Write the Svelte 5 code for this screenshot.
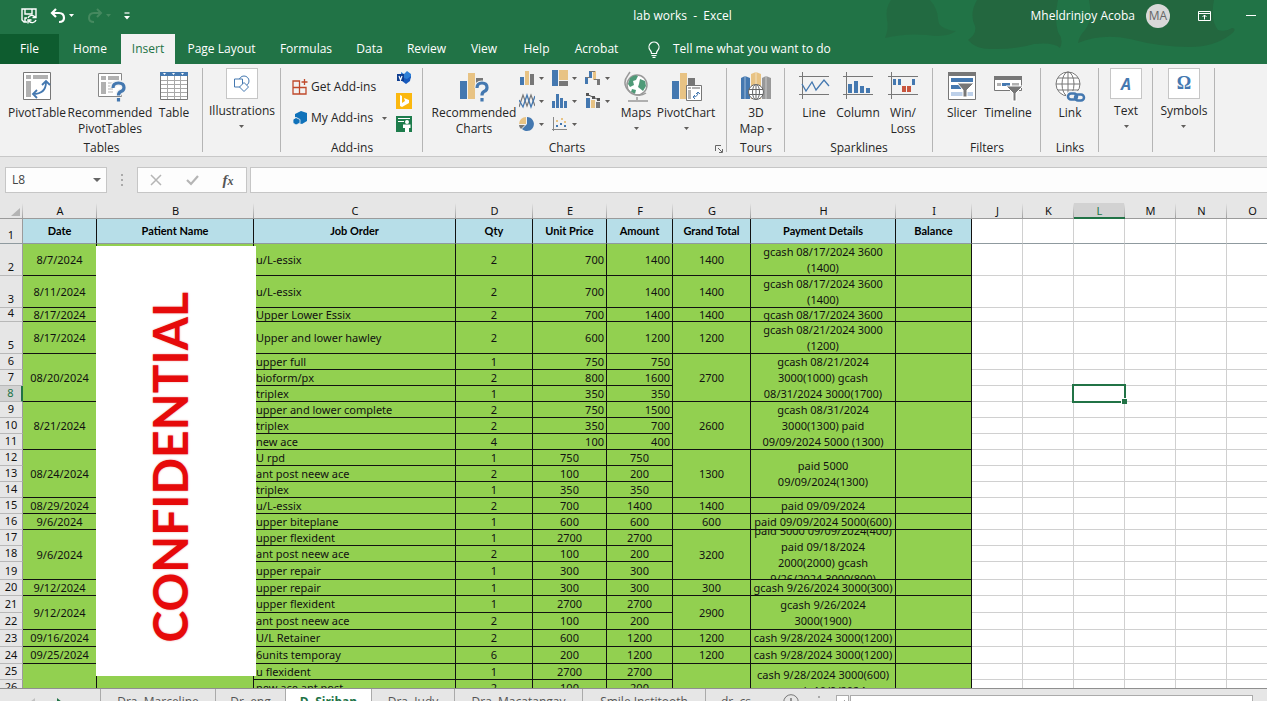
<script>
	const tabs = ['File', 'Home', 'Insert', 'Page Layout', 'Formulas', 'Data', 'Review', 'View', 'Help', 'Acrobat'];
	let activeTab = $state('Insert');

	const cols = [
		['A', 74], ['B', 157], ['C', 202], ['D', 77], ['E', 74], ['F', 66], ['G', 78], ['H', 145], ['I', 76],
		['J', 51], ['K', 51], ['L', 51], ['M', 51], ['N', 51], ['O', 51]
	];
	const blanks = cols.slice(9).map((c) => c[0]);
	const titles = ['Date', 'Patient Name', 'Job Order', 'Qty', 'Unit Price', 'Amount', 'Grand Total', 'Payment Details', 'Balance'];

	// span is how many rows the date, name, total, payment and balance cells cover
	const rows = [
		{ h: 32, span: 1, date: '8/7/2024', job: 'u/L-essix', qty: 2, price: 700, amount: 1400, total: 1400, pay: 'gcash 08/17/2024 3600\n(1400)' },
		{ h: 32, span: 1, date: '8/11/2024', job: 'u/L-essix', qty: 2, price: 700, amount: 1400, total: 1400, pay: 'gcash 08/17/2024 3600\n(1400)' },
		{ h: 14, span: 1, date: '8/17/2024', job: 'Upper Lower Essix', qty: 2, price: 700, amount: 1400, total: 1400, pay: 'gcash 08/17/2024 3600' },
		{ h: 32, span: 1, date: '8/17/2024', job: 'Upper and lower hawley', qty: 2, price: 600, amount: 1200, total: 1200, pay: 'gcash 08/21/2024 3000\n(1200)' },
		{ h: 16, span: 3, date: '08/20/2024', job: 'upper full', qty: 1, price: 750, amount: 750, total: 2700, pay: 'gcash 08/21/2024\n3000(1000) gcash\n08/31/2024 3000(1700)' },
		{ h: 16, job: 'bioform/px', qty: 2, price: 800, amount: 1600 },
		{ h: 16, job: 'triplex', qty: 1, price: 350, amount: 350 },
		{ h: 16, span: 3, date: '8/21/2024', job: 'upper and lower complete', qty: 2, price: 750, amount: 1500, total: 2600, pay: 'gcash 08/31/2024\n3000(1300) paid\n09/09/2024 5000 (1300)' },
		{ h: 16, job: 'triplex', qty: 2, price: 350, amount: 700 },
		{ h: 16, job: 'new ace', qty: 4, price: 100, amount: 400 },
		{ h: 16, span: 3, date: '08/24/2024', job: 'U rpd', qty: 1, price: 750, amount: 750, total: 1300, pay: 'paid 5000\n09/09/2024(1300)' },
		{ h: 16, job: 'ant post neew ace', qty: 2, price: 100, amount: 200 },
		{ h: 16, job: 'triplex', qty: 1, price: 350, amount: 350 },
		{ h: 16, span: 1, date: '08/29/2024', job: 'u/L-essix', qty: 2, price: 700, amount: 1400, total: 1400, pay: 'paid 09/09/2024' },
		{ h: 16, span: 1, date: '9/6/2024', job: 'upper biteplane', qty: 1, price: 600, amount: 600, total: 600, pay: 'paid 09/09/2024 5000(600)' },
		{ h: 16, span: 3, date: '9/6/2024', job: 'upper flexident', qty: 1, price: 2700, amount: 2700, total: 3200, pay: 'paid 5000 09/09/2024(400)\npaid 09/18/2024\n2000(2000) gcash\n9/26/2024 3000(800)' },
		{ h: 16, job: 'ant post neew ace', qty: 2, price: 100, amount: 200 },
		{ h: 18, job: 'upper repair', qty: 1, price: 300, amount: 300 },
		{ h: 16, span: 1, date: '9/12/2024', job: 'upper repair', qty: 1, price: 300, amount: 300, total: 300, pay: 'gcash 9/26/2024 3000(300)' },
		{ h: 17, span: 2, date: '9/12/2024', job: 'upper flexident', qty: 1, price: 2700, amount: 2700, total: 2900, pay: 'gcash 9/26/2024\n3000(1900)' },
		{ h: 17, job: 'ant post neew ace', qty: 2, price: 100, amount: 200 },
		{ h: 17, span: 1, date: '09/16/2024', job: 'U/L Retainer', qty: 2, price: 600, amount: 1200, total: 1200, pay: 'cash 9/28/2024 3000(1200)' },
		{ h: 17, span: 1, date: '09/25/2024', job: '6units temporay', qty: 6, price: 200, amount: 1200, total: 1200, pay: 'cash 9/28/2024 3000(1200)' },
		{ h: 16, span: 3, date: '', job: 'u flexident', qty: 1, price: 2700, amount: 2700, total: '', pay: 'cash 9/28/2024 3000(600)\ngcash 10/9/2024' },
		{ h: 16, job: 'new ace ant post', qty: 2, price: 100, amount: 200 },
		{ h: 7, job: '', qty: '', price: '', amount: '' }
	];

	function spanHeight(i) {
		return rows.slice(i, i + rows[i].span).reduce((sum, r) => sum + r.h, 0) - 1;
	}

	const sheets = ['Dra. Marceline', 'Dr. eng', 'D. Siriban', 'Dra. Judy', 'Dra. Macatangay', 'Smile Institooth', 'dr. cs'];
	let activeSheet = $state('D. Siriban');
	let formula = $state('');
	let cellName = $state('L8');
</script>

{#snippet caret()}
	<svg class="caret" width="5" height="3" viewBox="0 0 5 3"><path d="M0 0h5L2.5 3z" fill="#605e5c" /></svg>
{/snippet}

{#snippet bars()}
	<path d="M2 11h7v18H2z" fill="#4478b0" /><path d="M10 3h7v26h-7z" fill="#e8c384" />
{/snippet}

<div class="app">
	<header>
		<svg class="clouds" width="400" height="64" viewBox="0 0 400 64" fill="#23673f">
			<path d="M24 0q-6 8-4 20 2 8-2 18 20-5 42-3 20 3 29-4-18-2-18-12 0-10-8-19z" opacity=".7" />
			<path d="M110 0q-8 14-2 26 2 8-7 14 8 10 26 9 24 0 40-5 20-2 26 4 4-8-2-16-4-14 0-32z" />
			<path d="M222 0q4 20-4 30-6 6-7 13 24-10 52-4 30 8 60 8 24 0 40-12 8-6 2-7-6 4-14 2-8-10-4-30z" />
		</svg>
		<div class="titlebar">
			<div class="quick">
				<button aria-label="Save">
					<svg width="16" height="16" viewBox="0 0 16 16" fill="none" stroke="#fff" stroke-width="1.4">
						<path d="M6 14H3L1 12V1h14v5M4 1v5h7V1M4 14v-4h2" /><path d="M7 10a4 4 0 0 1 7-1M15 6v3.500h-3.500M15 12a4 4 0 0 1-7 1M7 15.500V12h3.500" />
					</svg>
				</button>
				<button aria-label="Undo">
					<svg width="24" height="16" viewBox="0 0 24 16" fill="none"><path d="M6 1L2 5l4 4M2 5h7q5 0 5 5 0 4-5 4" stroke="#fff" stroke-width="2.200" /><path d="M19 6h5l-2.500 3z" fill="#fff" /></svg>
				</button>
				<button aria-label="Redo">
					<svg width="24" height="16" viewBox="0 0 24 16" fill="none"><path d="M10 1l4 4-4 4M14 5H7q-5 0-5 5 0 4 5 4" stroke="#45895f" stroke-width="2" /><path d="M19 6h5l-2.500 3z" fill="#45895f" /></svg>
				</button>
				<button aria-label="Customize">
					<svg width="6" height="8" viewBox="0 0 6 8"><path d="M.5 1h5" stroke="#fff" stroke-width="1.200" /><path d="M0 4h6L3 7.500z" fill="#fff" /></svg>
				</button>
			</div>
			<div class="doc">lab works&nbsp; -&nbsp; Excel</div>
			<div class="account">
				<span>Mheldrinjoy Acoba</span>
				<span class="avatar">MA</span>
				<button class="display" aria-label="Ribbon display options">
					<svg width="13" height="10" viewBox="0 0 13 10" fill="none" stroke="#fff"><path d="M.5.5h12v9H.5zM.5 2.500h12M6.500 8.500V4M4.500 6l2-2 2 2" /></svg>
				</button>
				<button aria-label="Minimize"><svg width="10" height="2" viewBox="0 0 10 2"><path d="M0 .5h10" stroke="#fff" /></svg></button>
			</div>
		</div>
		<nav>
			{#each tabs as tab}
				<button class="tab" class:file={tab === 'File'} class:active={tab === activeTab} onclick={() => (activeTab = tab)}>{tab}</button>
			{/each}
			<button class="tell">
				<svg width="12" height="17" viewBox="0 0 12 17" fill="none" stroke="#fff" stroke-width="1.200"><path d="M3.500 12.500q0-2-1.500-3.500a5 5 0 1 1 8 0q-1.500 1.500-1.500 3.500zM3.500 14.500h5M4.500 16.400h3" /></svg>
				Tell me what you want to do
			</button>
		</nav>
	</header>

	<div class="ribbon">
		<section>
			<div class="body tables">
				<button>
					<svg width="32" height="32" viewBox="0 0 32 32">
						<path d="M2.500 2.500h27v27h-27z" fill="#fff" stroke="#777" /><path d="M5 5h5v4H5zM12 5h15v4H12zM5 11h5v16H5z" fill="#b1b1b1" />
						<path d="M12 24q13 0 13-12M16 20l-4 4 4 4M21 15l4-4 4 4" fill="none" stroke="#4478b0" stroke-width="1.800" />
					</svg>PivotTable
				</button>
				<button>
					<svg width="32" height="32" viewBox="0 0 32 32">
						<path d="M4.500 3.500h23v23h-23z" fill="#fff" stroke="#888" /><path d="M7 6h5v4H7zM14 6h11v4H14zM7 12h5v12H7z" fill="#b1b1b1" /><path d="M14 13h5M14 16h5M14 19h5M14 22h5" stroke="#b1b1b1" />
						<path d="M19 18q0-5 5.500-5t5.500 4.500q0 3-3 4-2.500 1-2.500 4M24.500 28v4" fill="none" stroke="#f2f2f2" stroke-width="6" /><path d="M19 18q0-5 5.500-5t5.500 4.500q0 3-3 4-2.500 1-2.500 4M24.500 28v3.500" fill="none" stroke="#4478b0" stroke-width="3.200" />
					</svg>Recommended<br />PivotTables
				</button>
				<button>
					<svg width="32" height="32" viewBox="0 0 32 32">
						<path d="M2.500 2.500h27v27h-27z" fill="#fff" stroke="#777" /><path d="M9.500 6v23M16.500 6v23M22.500 6v23M3 10.500h26M3 14.500h26M3 18.500h26M3 22.500h26M3 26.500h26" stroke="#a8a8a8" />
						<path d="M2 2h28v4H2z" fill="#4478b0" /><path d="M5 3h3L6.500 5zM14 3h3l-1.500 2zM23 3h3l-1.500 2z" fill="#fff" />
					</svg>Table
				</button>
			</div>
			<h2>Tables</h2>
		</section>
		<section>
			<div class="body framed">
				<button>
					<span class="frame"><svg width="18" height="18" viewBox="0 0 18 18" fill="#fff" stroke="#4478b0"><circle cx="11" cy="6" r="5" /><path d="M1.500 4h8v8h-8z" /><path d="M11 7.500l4.500 4.500-4.500 4.500L6.500 12z" /></svg></span>
					Illustrations{@render caret()}
				</button>
			</div>
		</section>
		<section>
			<div class="body addins">
				<div class="stores">
					<button>
						<svg width="16" height="16" viewBox="0 0 16 16" fill="none" stroke="#c0492b" stroke-width="1.300"><path d="M1 2h6.500v6.500H1zM1 8.500h6.500V15H1zM7.500 8.500H14V15H7.500zM12.500 0v6M9.500 3h6" /></svg>
						Get Add-ins
					</button>
					<button>
						<svg width="16" height="16" viewBox="0 0 16 16" fill="#1072ba"><path d="M9 1l6 2v8l-5 3-3-1q1-5-4-6V4z" /><path d="M4 7.500l4 2V13l-4 2-3-2V9.500z" stroke="#f2f2f2" stroke-width=".8" /></svg>
						My Add-ins <span class="far">{@render caret()}</span>
					</button>
				</div>
				<div class="minis">
					<button aria-label="Visio Data Visualizer"><svg width="16" height="16" viewBox="0 0 16 16"><path d="M5 2l3 2 3-3 4 3v4l-4 2-6-4z" fill="#2f7fd6" /><path d="M6 7l5 2 4-3-1 5-4 3-4-3z" fill="#185abd" /><path d="M1 4h7v7H1z" fill="#103f91" /><path d="M3 6l1.500 4L6 6" fill="none" stroke="#fff" stroke-width="1.200" /></svg></button>
					<button aria-label="Bing Maps"><svg width="16" height="16" viewBox="0 0 16 16"><path d="M0 0h16v16H0z" fill="#fbb80f" /><path d="M4 2l2 1v7l3-2-1-3 5 2v3l-7 4-2-1z" fill="#fff" /></svg></button>
					<button aria-label="People Graph"><svg width="16" height="16" viewBox="0 0 16 16"><path d="M0 0h16v16H0z" fill="#1e7c4c" /><path d="M2 2.500h12M2 5.500h6" stroke="#fff" /><circle cx="11" cy="6" r="2" fill="#fff" /><path d="M7 8.500h7.500V12H13v4H9v-4H7z" fill="#fff" /></svg></button>
				</div>
			</div>
			<h2>Add-ins</h2>
		</section>
		<section class="charts">
			<div class="body">
				<button>
					<svg width="32" height="32" viewBox="0 0 32 32">
						{@render bars()}<path d="M18 8h7v6h-7z" fill="#777" />
						<path d="M19 18q0-5 5-5t5 4.500q0 3-3 4-2 1-2 4M24 28v3.500" fill="none" stroke="#f2f2f2" stroke-width="5" /><path d="M19 18q0-5 5-5t5 4.500q0 3-3 4-2 1-2 4M24 28v3.500" fill="none" stroke="#4478b0" stroke-width="3.200" />
					</svg>Recommended<br />Charts
				</button>
				<div class="gallery">
					<button aria-label="Column chart"><svg width="16" height="16" viewBox="0 0 16 16"><path d="M1 7h4v8H1z" fill="#4478b0" /><path d="M6 1h4v14H6z" fill="#e8c384" /><path d="M11 4h4v11h-4z" fill="#777" /></svg>{@render caret()}</button>
					<button aria-label="Hierarchy chart"><svg width="16" height="16" viewBox="0 0 16 16"><path d="M0 0h6v16H0z" fill="#4478b0" /><path d="M7 0h9v10H7z" fill="#e8c384" /><path d="M7 11h9v5H7z" fill="#777" /></svg>{@render caret()}</button>
					<button aria-label="Waterfall chart"><svg width="16" height="16" viewBox="0 0 16 16"><path d="M0 7h3v7H0zM4 1h3v7H4z" fill="#4478b0" /><path d="M8 1h3v9H8z" fill="#e8c384" /><path d="M12 9h3v6h-3z" fill="#777" /><path d="M1 7.500h4M5 1.500h5M9 9.500h5" fill="none" stroke="#777" /></svg>{@render caret()}</button>
					<button aria-label="Line chart"><svg width="16" height="16" viewBox="0 0 16 16" fill="none"><path d="M0 14L4 2l4 11 4-11 4 11" stroke="#777" stroke-width="1.200" /><path d="M0 7l4 7 4-12 4 12 4-11" stroke="#4478b0" stroke-width="1.300" /></svg>{@render caret()}</button>
					<button aria-label="Statistic chart"><svg width="16" height="16" viewBox="0 0 16 16" fill="#4478b0"><path d="M0 8h3v7H0zM4 1h3v14H4zM8 5h3v10H8zM12 8h3v7h-3z" /></svg>{@render caret()}</button>
					<button aria-label="Combo chart"><svg width="16" height="16" viewBox="0 0 16 16"><path d="M1 5h4v10H1z" fill="#4478b0" /><path d="M6 7h4v8H6z" fill="#e8c384" /><path d="M11 9h4v6h-4z" fill="#777" /><path d="M2 1.500L8 4l6 3" fill="none" stroke="#555" /><path d="M1 0h3v3H1zM7 3h3v3H7zM12 5h3v3h-3z" fill="#555" /></svg>{@render caret()}</button>
					<button aria-label="Pie chart"><svg width="16" height="16" viewBox="0 0 16 16"><path d="M7 1v7H0a7 7 0 0 1 7-7" fill="#e8c384" /><path d="M8 1a7 7 0 1 1-5 12l5-5z" fill="#4478b0" /><path d="M0 9h6l-4 4q-2-2-2-4" fill="#777" /></svg>{@render caret()}</button>
					<button aria-label="Scatter chart"><svg width="16" height="16" viewBox="0 0 16 16"><path d="M1.500 1v14M0 13.500h15" fill="none" stroke="#888" /><path d="M4 9h2v2H4zM8 7h2v2H8zM12 9h2v2h-2z" fill="#4478b0" /><path d="M4 4h2v2H4zM9 2h2v2H9zM12 5h2v2h-2z" fill="#e8c384" /></svg>{@render caret()}</button>
				</div>
				<button>
					<svg width="32" height="32" viewBox="0 0 32 32" fill="none"><circle cx="17" cy="15" r="10" fill="#fff" stroke="#999" stroke-width="1.500" /><path d="M10 8q5-4 8-2l-2 4-3 1 1 4-4 2-2-3zM20 9l5 2 1 5-3 5-5-4 1-3zM12 19l4 1-1 4-4-2z" fill="#4f9a78" /><path d="M10 2L8 5q-7 9 2 17 9 6 16 1M17 27v3M8 31h20" stroke="#999" stroke-width="1.500" /></svg>Maps{@render caret()}
				</button>
				<button>
					<svg width="32" height="32" viewBox="0 0 32 32">{@render bars()}<path d="M18 8h7v8h-7z" fill="#777" /><path d="M16.500 15.500h15v15h-15z" fill="#fff" stroke="#777" /><path d="M18 17h3v2h-3zM22 17h8v2h-8zM18 20h3v9h-3z" fill="#b1b1b1" /><path d="M23 27q5 0 5-5M25 25l-2 2 2 2M26 24l2-2 2 2" fill="none" stroke="#4478b0" /></svg>PivotChart{@render caret()}
				</button>
			</div>
			<h2>Charts</h2>
			<button class="launcher" aria-label="Chart options"><svg width="8" height="8" viewBox="0 0 8 8" fill="none" stroke="#666"><path d="M.5 6V.5H6M3 3l4 4M7.500 4v3.500H4" /></svg></button>
		</section>
		<section>
			<div class="body centered">
				<button>
					<svg width="32" height="32" viewBox="0 0 32 32"><path d="M1 8l4-2 5 2v21H1z" fill="#4478b0" /><path d="M11 4l5-2 5 2v25H11z" fill="#e8c384" /><path d="M22 8l4-2 5 2v21h-9z" fill="#999" /><path d="M5 6v23M16 2v27M26 6v23" stroke="#fff" opacity=".5" /><g fill="#fff" stroke="#666"><circle cx="16" cy="22" r="7.500" /><ellipse cx="16" cy="22" rx="3.500" ry="7.500" /><path d="M9 19.500h14M9 24.500h14M16 15v14" /></g></svg>3D<br /><span>Map {@render caret()}</span>
				</button>
			</div>
			<h2>Tours</h2>
		</section>
		<section>
			<div class="body sparklines">
				<button><svg width="32" height="32" viewBox="0 0 32 32" fill="none"><path d="M1 6.500h30M1 24.500h30M4.500 2v27" stroke="#777" /><path d="M4 14l4 7 6-9 4 8 8-10 5 6" stroke="#4478b0" stroke-width="1.300" /></svg>Line</button>
				<button><svg width="32" height="32" viewBox="0 0 32 32"><path d="M1 6.500h30M1 24.500h30M4.500 2v27" stroke="#777" /><path d="M6 14h4v9H6zM12 11h4v12h-4zM18 16h4v7h-4zM24 18h4v5h-4z" fill="#4478b0" /></svg>Column</button>
				<button><svg width="32" height="32" viewBox="0 0 32 32"><path d="M1 6.500h30M1 24.500h30M4.500 2v27" stroke="#777" /><path d="M6 9h3v6H6zM11 9h3v6h-3zM25 9h3v6h-3z" fill="#4478b0" /><path d="M15 16h4v6h-4zM20 16h4v6h-4z" fill="#c8553d" /></svg>Win/<br />Loss</button>
			</div>
			<h2>Sparklines</h2>
		</section>
		<section>
			<div class="body filters">
				<button><svg width="32" height="32" viewBox="0 0 32 32"><path d="M2.500 3.500h27v26h-27z" fill="#fff" stroke="#777" /><path d="M2 2h28v4H2z" fill="#777" /><path d="M5 8h22v4H5zM5 15h10v4H5z" fill="#4478b0" /><path d="M5 22h22v4H5z" fill="#bdd0e9" /><path d="M11 13h17l-7 7v7h-4v-7z" fill="#777" stroke="#fff" /></svg>Slicer</button>
				<button><svg width="32" height="32" viewBox="0 0 32 32"><path d="M2.500 6.500h27v14h-27z" fill="#fff" stroke="#777" /><path d="M2 6h28v4H2z" fill="#777" /><path d="M5 13h4v3H5zM20 13h7v3h-7z" fill="#b1b1b1" /><path d="M10 13h8v3h-8z" fill="#4478b0" /><path d="M14 16h17l-7 7v8h-3v-8z" fill="#777" stroke="#fff" /></svg>Timeline</button>
			</div>
			<h2>Filters</h2>
		</section>
		<section>
			<div class="body centered">
				<button><svg width="32" height="32" viewBox="0 0 32 32" fill="none"><g stroke="#777" fill="#fff"><circle cx="14" cy="14" r="12" /><ellipse cx="14" cy="14" rx="6" ry="12" fill="none" /><path d="M2 14h24M4 8h20M4 20h20M14 2v24" /></g><rect x="12" y="21" width="20" height="11" rx="5" fill="#f2f2f2" /><g stroke="#4478b0" stroke-width="2.500"><rect x="14" y="23.500" width="9" height="6" rx="3" /><rect x="21" y="24.500" width="9" height="6" rx="3" /></g></svg>Link</button>
			</div>
			<h2>Links</h2>
		</section>
		<section>
			<div class="body framed"><button><span class="frame letter">A</span>Text{@render caret()}</button></div>
		</section>
		<section>
			<div class="body framed"><button><span class="frame omega">Ω</span>Symbols{@render caret()}</button></div>
		</section>
	</div>

	<div class="formulabar">
		<div class="namebox">
			<input aria-label="Name box" bind:value={cellName} />
			<svg width="8" height="4" viewBox="0 0 8 4"><path d="M0 0h8L4 4z" fill="#666" /></svg>
		</div>
		<svg class="grip" width="2" height="12" viewBox="0 0 2 12"><path d="M0 0h2v2H0zM0 5h2v2H0zM0 10h2v2H0z" fill="#aaa" /></svg>
		<div class="actions">
			<button aria-label="Cancel"><svg width="12" height="12" viewBox="0 0 12 12"><path d="M1 1l10 10M11 1L1 11" stroke="#b5b5b5" stroke-width="1.500" /></svg></button>
			<button aria-label="Enter"><svg width="13" height="12" viewBox="0 0 13 12" fill="none"><path d="M1 6l4 4 7-8" stroke="#b5b5b5" stroke-width="2.200" /></svg></button>
			<button class="fx">f<small>x</small></button>
		</div>
		<input class="formula" aria-label="Formula" bind:value={formula} />
	</div>

	<main>
		<table>
			<colgroup>
				<col class="gutter" />
				{#each cols as [name, width]}<col style="width: {width}px" />{/each}
				<col />
			</colgroup>
			<thead>
				<tr>
					<th class="corner" aria-label="Select all"><svg width="9" height="8" viewBox="0 0 9 8"><path d="M9 0v8H0z" fill="#b4b4b4" /></svg></th>
					{#each cols as [name]}<th class:selected={name === 'L'}>{name}</th>{/each}
					<th></th>
				</tr>
			</thead>
			<tbody>
				<tr class="titles">
					<th class="num">1</th>
					{#each titles as title}<td class="title">{title}</td>{/each}
					{#each blanks as name}<td></td>{/each}
					<td></td>
				</tr>
				{#each rows as row, i}
					<tr style="height: {row.h}px">
						<th class="num" class:selected={i === 6}><div style="height: {row.h - 1}px">{row.job ? i + 2 : ''}</div></th>
						{#if row.span}
							<td class="fill" rowspan={row.span}><div style="height: {spanHeight(i)}px">{row.date}</div></td>
							<td class="fill" rowspan={row.span}></td>
						{/if}
						<td class="fill job"><div style="height: {row.h - 1}px">{row.job}</div></td>
						<td class="fill"><div style="height: {row.h - 1}px">{row.qty}</div></td>
						<td class="fill" class:right={i < 10}><div style="height: {row.h - 1}px">{row.price}</div></td>
						<td class="fill" class:right={i < 10}><div style="height: {row.h - 1}px">{row.amount}</div></td>
						{#if row.span}
							<td class="fill" rowspan={row.span}><div style="height: {spanHeight(i)}px">{row.total}</div></td>
							<td class="fill" rowspan={row.span}><div style="height: {spanHeight(i)}px">{row.pay}</div></td>
							<td class="fill" rowspan={row.span}></td>
						{/if}
						{#each blanks as name}<td class:cursor={i === 6 && name === 'L'}></td>{/each}
						<td></td>
					</tr>
				{/each}
			</tbody>
		</table>
		<div class="cover"><span>CONFIDENTIAL</span></div>
	</main>

	<footer>
		<div class="arrows">
			<svg width="5" height="8" viewBox="0 0 5 8"><path d="M5 0v8L0 4z" fill="#c0c0c0" /></svg>
			<svg width="5" height="8" viewBox="0 0 5 8"><path d="M0 0v8l5-4z" fill="#217346" /></svg>
		</div>
		{#each sheets as sheet}
			<button class="sheet" class:open={sheet === activeSheet} onclick={() => (activeSheet = sheet)}>{sheet}</button>
		{/each}
		<button class="add" aria-label="New sheet"><svg width="16" height="16" viewBox="0 0 16 16" fill="none" stroke="#777"><circle cx="8" cy="8" r="7.300" /><path d="M8 4v8M4 8h8" stroke-width="1.500" /></svg></button>
		<svg class="grip" width="2" height="12" viewBox="0 0 2 12"><path d="M0 0h2v2H0zM0 5h2v2H0zM0 10h2v2H0z" fill="#aaa" /></svg>
		<div class="scroll">
			<button aria-label="Scroll left"><svg width="5" height="8" viewBox="0 0 5 8"><path d="M5 0v8L0 4z" fill="#666" /></svg></button>
			<div class="thumb"></div>
		</div>
	</footer>
</div>

<style>
	:global(body) {
		margin: 0;
	}
	.app {
		height: 100vh;
		display: flex;
		flex-direction: column;
		overflow: hidden;
		background: #e6e6e6;
		color: #262626;
		font: 12px/16px 'Open Sans', 'Noto Sans', sans-serif;
	}
	button {
		font: inherit;
		color: inherit;
		background: none;
		border: 0;
		padding: 0;
		white-space: nowrap;
	}
	svg {
		display: block;
		flex: none;
	}

	header {
		position: relative;
		background: #217346;
		color: #fff;
	}
	.clouds {
		position: absolute;
		top: 0;
		right: 0;
	}
	.titlebar {
		position: relative;
		display: grid;
		grid-template-columns: 1fr auto 1fr;
		align-items: center;
		height: 34px;
		padding: 0 11px 2px 21px;
		box-sizing: border-box;
	}
	.quick,
	.account {
		display: flex;
		align-items: center;
	}
	.quick {
		gap: 13px;
	}
	.doc {
		padding-left: 88px;
	}
	.account {
		justify-content: flex-end;
	}
	.avatar {
		width: 24px;
		margin: 0 28px 0 11px;
		line-height: 24px;
		border-radius: 50%;
		background: #d8d8d8;
		color: #666;
		text-align: center;
	}
	.display {
		margin-right: 35px;
	}
	nav {
		position: relative;
		display: grid;
		grid-template-columns: 59px 62px 54px 93px 76px 51px 63px 52px 53px 67px auto;
		justify-content: start;
		height: 30px;
	}
	.file {
		background: #0e5c2f;
	}
	.tab.active {
		background: #f2f2f2;
		color: #217346;
	}
	.tell {
		display: flex;
		align-items: center;
		gap: 13px;
		padding-left: 18px;
	}

	.ribbon {
		display: grid;
		grid-template-columns: 203px 78px 142px 304px 58px 148px 108px 58px 54px 62px;
		height: 92px;
		background: #f2f2f2;
		border-bottom: 1px solid #c8c8c8;
	}
	section {
		position: relative;
		display: flex;
		flex-direction: column;
		justify-content: space-between;
		background: linear-gradient(#b5b5b5, #b5b5b5) right 4px / 1px 84px no-repeat;
	}
	h2 {
		margin: 0;
		font: inherit;
		text-align: center;
	}
	.charts h2 {
		padding-right: 16px;
	}
	.body {
		display: flex;
		padding-top: 6px;
	}
	.body > button {
		display: flex;
		flex-direction: column;
		align-items: center;
	}
	.body > button > svg:first-child {
		margin-bottom: 3px;
	}
	.body > button > .caret {
		margin-top: 6px;
	}
	.body span .caret {
		display: inline-block;
		vertical-align: middle;
	}
	.tables {
		display: grid;
		grid-template-columns: 64px 82px 46px;
		padding-left: 5px;
	}
	.centered,
	.framed {
		justify-content: center;
	}
	.framed {
		padding-top: 4px;
	}
	.frame {
		width: 30px;
		height: 29px;
		margin-bottom: 4px;
		display: flex;
		align-items: center;
		justify-content: center;
		background: #fff;
		border: 1px solid #c6c6c6;
		color: #4478b0;
	}
	.letter {
		font: italic bold 16px 'Noto Sans', sans-serif;
	}
	.omega {
		font: bold 18px 'Liberation Serif', serif;
	}
	.addins {
		justify-content: space-between;
		padding: 6px 11px 0;
	}
	.stores {
		display: flex;
		flex-direction: column;
		gap: 15px;
		padding-top: 9px;
	}
	.stores button {
		display: flex;
		align-items: center;
		gap: 3px;
	}
	.far {
		padding-left: 6px;
	}
	.minis {
		display: flex;
		flex-direction: column;
		gap: 7px;
	}
	.charts .body {
		display: grid;
		grid-template-columns: 84px 99px 38px 60px;
		column-gap: 1px;
		padding-left: 9px;
		justify-content: start;
	}
	.gallery {
		display: grid;
		grid-template-columns: repeat(3, 33px);
		grid-auto-rows: 16px;
		row-gap: 7px;
		align-content: start;
		padding-left: 2px;
	}
	.gallery button {
		display: flex;
		align-items: center;
		gap: 4px;
	}
	.launcher {
		position: absolute;
		right: 4px;
		bottom: 3px;
	}
	.sparklines {
		display: grid;
		grid-template-columns: 42px 46px 44px;
		padding-left: 8px;
	}
	.filters {
		display: grid;
		grid-template-columns: 42px 50px;
		padding-left: 8px;
	}

	.formulabar {
		display: flex;
		align-items: center;
		height: 46px;
		padding-left: 5px;
	}
	.namebox,
	.actions,
	.formula {
		height: 26px;
		box-sizing: border-box;
		background: #fdfdfd;
		border: 1px solid #c6c6c6;
	}
	.namebox {
		display: flex;
		align-items: center;
		width: 102px;
		padding: 0 5px 0 6px;
	}
	.namebox input {
		flex: 1;
		min-width: 0;
		border: 0;
		padding: 0;
		background: none;
		font: inherit;
		color: #444;
	}
	.grip {
		margin: 0 14px;
	}
	.actions {
		display: grid;
		grid-template-columns: repeat(3, 36px);
		place-items: center;
		width: 110px;
		margin-right: 3px;
	}
	.fx {
		font: italic bold 15px/16px 'Liberation Serif', serif;
		color: #555;
	}
	.fx small {
		font-size: 12px;
	}
	.formula {
		flex: 1;
		border-right: 0;
		font: inherit;
	}

	main {
		position: relative;
		flex: 1;
		min-height: 0;
		overflow: hidden;
		background: #fff;
	}
	table {
		width: 100%;
		table-layout: fixed;
		border-collapse: separate;
		border-spacing: 0;
		font-family: 'Noto Sans', 'Open Sans', sans-serif;
		font-size: 11px;
		color: #111;
	}
	.gutter {
		width: 23px;
	}
	th,
	td {
		box-sizing: border-box;
		padding: 0;
		border: solid #d0d0d0;
		border-width: 0 1px 1px 0;
		text-align: center;
		font-weight: 400;
	}
	thead th {
		height: 16px;
		line-height: 15px;
		background: linear-gradient(#e6e6e6, #a0a0a0) right / 1px 100% no-repeat #e6e6e6;
		border-right: 0;
		border-bottom-color: #9b9b9b;
	}
	thead th.selected {
		background-color: #d2d2d2;
		color: #217346;
		box-shadow: inset 0 -1px #217346;
		border-bottom-color: #217346;
	}
	.corner svg {
		margin: 3px 0 0 11px;
	}
	.titles {
		height: 25px;
	}
	.titles th,
	.titles td {
		border-bottom-color: #8f9a9f;
	}
	.titles .title {
		background: #b7dee8;
		border-right-color: #111;
		color: #000;
		font: bold 11px/16px Lato, sans-serif;
	}
	.num {
		background: #e6e6e6;
		border-color: #b8b8b8;
		border-right-color: #9b9b9b;
		vertical-align: bottom;
	}
	.num.selected {
		background: #d2d2d2;
		color: #217346;
		border-right: 2px solid #217346;
	}
	td div,
	th div {
		display: flex;
		align-items: center;
		justify-content: center;
		overflow: hidden;
		white-space: pre;
	}
	.num div {
		align-items: flex-end;
	}
	.fill {
		background: #92d050;
		border-color: #111;
	}
	.job div {
		justify-content: flex-start;
		padding-left: 2px;
	}
	.right div {
		justify-content: flex-end;
		padding-right: 2px;
	}
	.cursor {
		position: relative;
	}
	.cursor::before {
		content: '';
		position: absolute;
		inset: -2px;
		border: 2px solid #217346;
	}
	.cursor::after {
		content: '';
		position: absolute;
		right: -3px;
		bottom: -3px;
		width: 5px;
		height: 5px;
		background: #217346;
		border: solid #fff;
		border-width: 1px 0 0 1px;
	}
	.cover {
		position: absolute;
		left: 96px;
		top: 43px;
		width: 160px;
		height: 430px;
		box-sizing: border-box;
		padding: 12px 12px 0 0;
		display: flex;
		align-items: center;
		justify-content: center;
		background: #fff;
	}
	.cover span {
		writing-mode: vertical-rl;
		transform: rotate(180deg);
		color: #e60a0a;
		font: bold 48px/60px Lato, sans-serif;
		text-shadow: 0 0 2px #e8a0a0;
	}

	footer {
		display: grid;
		grid-template-columns: 101px 115px 70px 86px 83px 128px 123px 60px 32px auto 1fr;
		flex: 0 0 12px;
		overflow: hidden;
		border-top: 1px solid #8f8f8f;
		color: #555;
	}
	.arrows {
		display: flex;
		gap: 22px;
		height: 26px;
		align-items: center;
		padding-left: 30px;
		border-right: 1px solid #aaa;
	}
	.sheet {
		height: 26px;
		border-right: 1px solid #aaa;
	}
	.sheet:nth-of-type(7) {
		border-right: 0;
	}
	.sheet.open {
		background: #fff;
		color: #217346;
		font-weight: bold;
	}
	.add {
		height: 26px;
		padding-left: 17px;
	}
	footer .grip {
		margin: 7px 16px 0 20px;
	}
	.scroll {
		display: flex;
		height: 18px;
		margin: 6px 14px 0 0;
		gap: 1px;
	}
	.scroll button,
	.thumb {
		background: #fff;
		border: 1px solid #ababab;
	}
	.scroll button {
		width: 13px;
		padding-left: 3px;
	}
	.thumb {
		flex: 1;
	}
</style>
